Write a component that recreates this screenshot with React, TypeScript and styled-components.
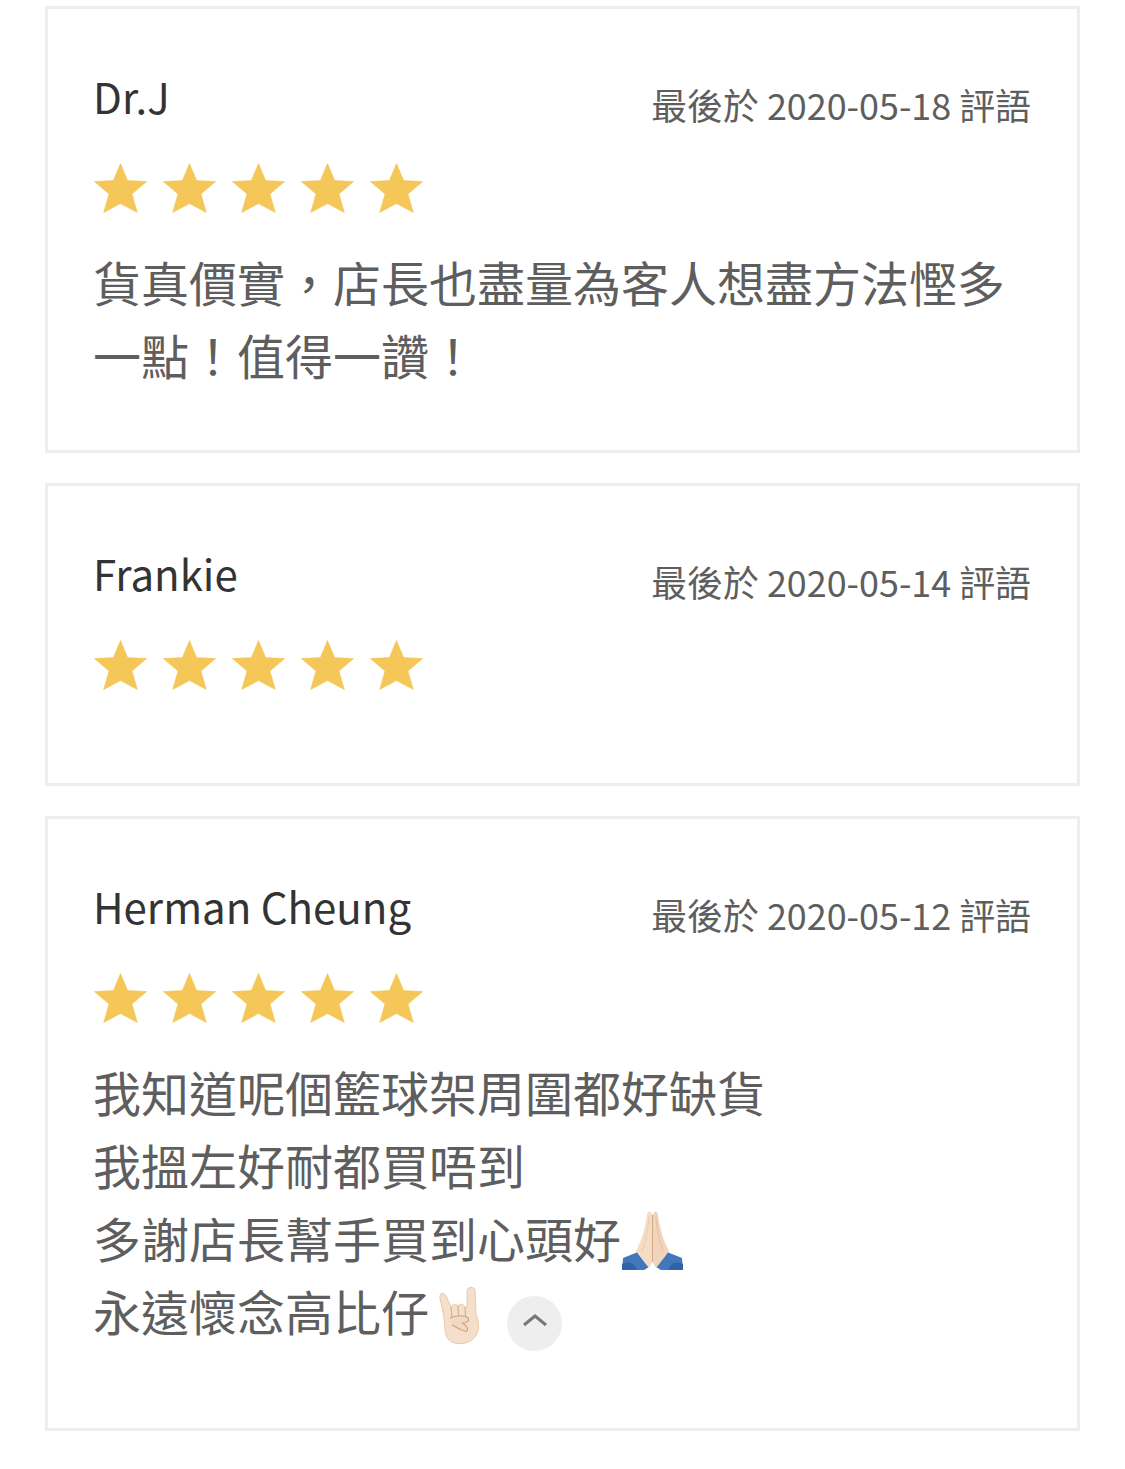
import React from "react";
import styled, { createGlobalStyle } from "styled-components";

type Review = {
  author: string;
  date: string;
  lines: React.ReactNode[];
  expandable?: boolean;
};

const GlobalStyle = createGlobalStyle`
  body {
    margin: 0;
    background: #fff;
    font-family: "Noto Sans CJK TC", "Noto Sans", sans-serif;
  }
`;

const Page = styled.div`
  display: flex;
  flex-direction: column;
  gap: 30px;
  box-sizing: border-box;
  width: 1125px;
  height: 1469px;
  padding: 6px 45px 0;
  overflow: hidden;
`;

const Card = styled.div`
  box-sizing: border-box;
  width: 1035px;
  border: 3px solid #eeeeee;
  padding: 57px 46px 59px 45px;
`;

const Header = styled.div`
  display: flex;
  justify-content: space-between;
  align-items: flex-start;
  height: 60px;
`;

const Author = styled.div`
  font-size: 42px;
  line-height: 60px;
  color: #333333;
`;

const DateText = styled.div`
  font-size: 35.9px;
  line-height: 52px;
  margin-top: 12px;
  color: #5e5e5e;
`;

const Stars = styled.div`
  display: flex;
  gap: 16px;
  margin-top: 37px;
  padding-left: 1px;
`;

const StarIcon = styled.svg`
  display: block;
  width: 53px;
  height: 50px;
`;

const Body = styled.div<{ $empty: boolean; $expandable?: boolean }>`
  margin-top: ${(p) => (p.$empty ? "0" : "32px")};
  min-height: ${(p) => (p.$empty ? "34px" : "0")};
  padding-bottom: ${(p) => (p.$expandable ? "22px" : "0")};
`;

const Line = styled.div`
  display: flex;
  align-items: center;
  height: 73px;
  font-size: 48px;
  line-height: 73px;
  color: #5e5e5e;
`;

const PrayIcon = styled.svg`
  display: block;
  flex: none;
  width: 61px;
  height: 59px;
  margin-top: 6px;
  margin-left: 1px;
`;

const HornsIcon = styled.svg`
  display: block;
  flex: none;
  width: 46px;
  height: 59px;
  margin-top: 9px;
  margin-left: 8px;
`;

const CollapseButton = styled.button`
  display: flex;
  align-items: center;
  justify-content: center;
  width: 55px;
  height: 55px;
  margin: 25px 0 0 24px;
  padding: 0 0 6px;
  border: 0;
  border-radius: 50%;
  background: #eeeeee;
`;

const Star = () => (
  <StarIcon viewBox="0 0 53 50">
    <path
      d="M26.5 0.5 L33.6 17.6 L52.6 18.6 L38 31 L43.3 49.5 L26.5 40.6 L9.7 49.5 L15 31 L0.4 18.6 L19.4 17.6 Z"
      fill="#f5c658"
      stroke="#f5c658"
      strokeWidth="0.6"
      strokeLinejoin="round"
    />
  </StarIcon>
);

const PrayEmoji = () => (
  <PrayIcon viewBox="0 0 61 59">
    <path d="M1 47 L16 41 L27 56 L22 59 L0 59 Z" fill="#4278bb" />
    <path d="M60 47 L45 41 L34 56 L39 59 L61 59 Z" fill="#4278bb" />
    <path d="M0 59 L0 53 C6 50 12 51 15 59 Z" fill="#2f62a6" />
    <path d="M61 59 L61 53 C55 50 49 51 46 59 Z" fill="#2f62a6" />
    <path d="M30.3 4 C28.500 -1 25.500 0 25 4 C23.500 16 20 29 14 40 C19 47 23 52 27 57 L30.300 51 Z" fill="#f5dcc5" />
    <path d="M30.7 4 C32.500 -1 35.500 0 36 4 C37.500 16 41 29 47 40 C42 47 38 52 34 57 L30.700 51 Z" fill="#f1d4ba" />
    <path d="M30.500 4 L30.500 51" stroke="#cfa988" strokeWidth="1" fill="none" />
    <path d="M27 6 C26 18 24 30 20 40" stroke="#e6c6a9" strokeWidth="0.800" fill="none" />
    <path d="M34 6 C35 18 37 30 41 40" stroke="#dfbb9c" strokeWidth="0.800" fill="none" />
  </PrayIcon>
);

const HornsEmoji = () => (
  <HornsIcon viewBox="0 0 46 59">
    <path
      d="M3 12 C2 7 7 6 9 10 C11 14 12 17 14 21 C15 18 19 18 21 20 C22 17 27 18 28 21 L30 22 L30 5 C30 0 38 0 38 5 L39 28 C42 36 43 44 38 51 C32 59 17 60 11 53 C7 47 8 38 7 32 C6 25 4 18 3 12 Z"
      fill="#f5dfca"
      stroke="#e8c9ad"
      strokeWidth="1"
    />
    <path d="M14 21 L15 31 M21 20 L21.500 30 M28 21 L28.500 30" stroke="#cfa988" strokeWidth="1" fill="none" />
    <path d="M13 32 C19 29 28 29 31 32 C33 35 30 37 25 37 C29 39 32 42 30 45 C26 46 20 41 15 39" stroke="#c9a283" strokeWidth="1.100" fill="#f2d8c1" />
  </HornsIcon>
);

const reviews: Review[] = [
  {
    author: "Dr.J",
    date: "最後於 2020-05-18 評語",
    lines: ["貨真價實，店長也盡量為客人想盡方法慳多", "一點！值得一讚！"],
  },
  {
    author: "Frankie",
    date: "最後於 2020-05-14 評語",
    lines: [],
  },
  {
    author: "Herman Cheung",
    date: "最後於 2020-05-12 評語",
    lines: [
      "我知道呢個籃球架周圍都好缺貨",
      "我搵左好耐都買唔到",
      <>
        多謝店長幫手買到心頭好
        <PrayEmoji />
      </>,
      <>
        永遠懷念高比仔
        <HornsEmoji />
      </>,
    ],
    expandable: true,
  },
];

const App: React.FC = () => {
  return (
    <Page>
      <GlobalStyle />
      {reviews.map((review) => (
        <Card key={review.author}>
          <Header>
            <Author>{review.author}</Author>
            <DateText>{review.date}</DateText>
          </Header>
          <Stars>
            {[0, 1, 2, 3, 4].map((i) => (
              <Star key={i} />
            ))}
          </Stars>
          <Body $empty={review.lines.length === 0} $expandable={review.expandable}>
            {review.lines.map((line, i) => (
              <Line key={i}>
                {line}
                {review.expandable && i === review.lines.length - 1 && (
                  <CollapseButton aria-label="collapse">
                    <svg width="24" height="14" viewBox="0 0 24 14">
                      <path d="M1 12 L12 3 L23 12" stroke="#777" strokeWidth="3" fill="none" />
                    </svg>
                  </CollapseButton>
                )}
              </Line>
            ))}
          </Body>
        </Card>
      ))}
    </Page>
  );
};

export default App;
